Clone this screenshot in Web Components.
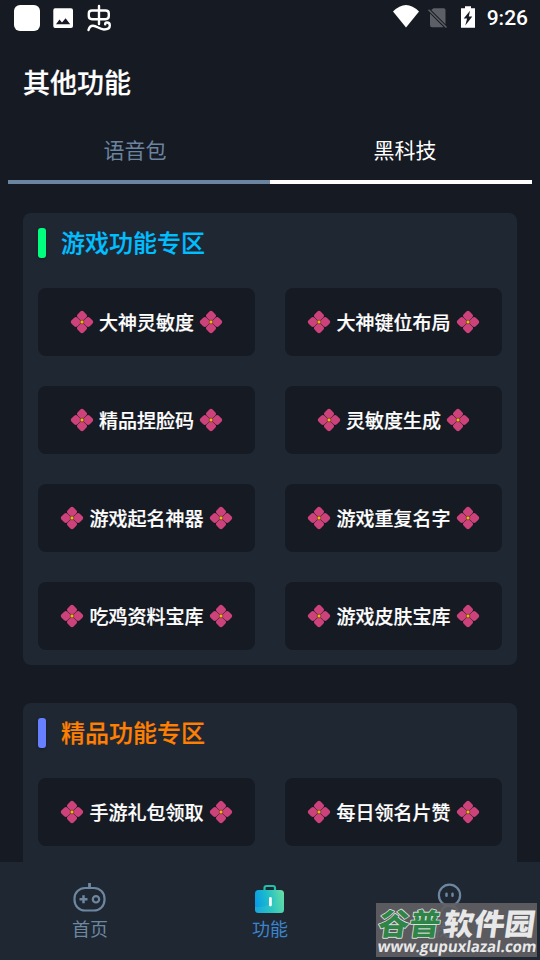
<!DOCTYPE html>
<html lang="zh-CN"><head><meta charset="utf-8"><title>其他功能</title>
<style>html,body{margin:0;height:100%;background:#161a23;overflow:hidden}</style></head>
<body><app-screen></app-screen>
<script>
const define=(name,html)=>{const t=document.createElement('template');t.innerHTML=html;
customElements.define(name,class extends HTMLElement{constructor(){super();this.attachShadow({mode:'open'}).append(t.content.cloneNode(true));}});};

define('flower-icon',`<style>:host{display:block;width:24px;height:24px}svg{display:block}</style>
<svg width="24" height="24" viewBox="-12 -12 24 24"><g fill="#cd427a" transform="rotate(45)">
<rect x=".2" y=".2" width="8.300" height="8.300" rx="2.300"/><rect x="-8.500" y=".2" width="8.300" height="8.300" rx="2.300"/><rect x=".2" y="-8.500" width="8.300" height="8.300" rx="2.300"/><rect x="-8.500" y="-8.500" width="8.300" height="8.300" rx="2.300"/></g>
<rect x="-1.700" y="-1.700" width="3.400" height="3.400" rx=".8" fill="#f5b60c" stroke="#5a3030" stroke-width=".6"/></svg>`);

define('feature-button',`<style>:host{display:flex;align-items:center;justify-content:center;gap:5px;height:68px;border-radius:8px;background:#161a23;color:#fff;font-size:19px;line-height:28px;font-weight:500;white-space:nowrap;-webkit-text-stroke:.2px}span{margin-top:-1px}</style><flower-icon></flower-icon><span><slot></slot></span><flower-icon></flower-icon>`);

define('feature-card',`<style>:host{display:block;background:#1f2733;border-radius:8px;padding:15px}
header{display:flex;align-items:center;gap:15px;height:30px;margin-bottom:30px;font-size:24px;line-height:30px;font-weight:500;color:var(--title);-webkit-text-stroke:.2px}
i{width:8px;height:30px;border-radius:3px;background:var(--bar);box-shadow:0 1px 3px #0005}b{font-weight:inherit;margin-top:-2px}
div{display:grid;grid-template-columns:1fr 1fr;gap:30px}</style>
<header><i></i><b><slot name="title"></slot></b></header><div><slot></slot></div>`);

define('status-bar',`<style>:host{display:flex;justify-content:space-between;height:36px;box-sizing:border-box;padding:0 12px 0 14px}
div{display:flex;align-items:center}svg{display:block}span{font:500 21px/38px Roboto,sans-serif;color:#fff}</style>
<div><svg width="100" height="36" fill="#fff"><rect y="5" width="26" height="26" rx="6"/>
<path fill-rule="evenodd" d="M41 8.200H57Q59 8.200 59 10.200V26Q59 28 57 28H41Q39.300 28 39.300 26V10.200Q39.300 8.200 41 8.200ZM42 24.300H56.200L51.600 18.200 48 22.600 45.500 19.600Z"/>
<g fill="none" stroke="#fff" stroke-width="2.400" stroke-linecap="round"><path d="M78 10.500H91.500Q94.800 10.500 94.800 13.500V16Q94.800 19.200 91.500 19.200H78Q74.800 19.200 74.800 16V13.500Q74.800 10.500 78 10.500M85 6V24"/><path d="M74.500 30Q75.500 25.700 79 25.700C83 25.700 85.500 29.500 90 29.500Q95.800 29.500 95.800 25.500Q95.800 22.500 93 22.500Q91 22.500 91.200 24.300"/></g></svg></div>
<div><svg width="94" height="36"><path fill="#fff" d="M0 11.500Q13-1.500 26 11.500L13 27.500Z"/>
<path fill="#5c5f66" d="M40.500 8.200H50.700Q52.500 8.200 52.500 10V24.200L38.200 10ZM37 13.500L50.700 27.200H39Q37 27.200 37 25Z"/><path d="M35.500 9.700L53.500 27.500" stroke="#5c5f66" stroke-width="1.500"/>
<path fill="#fff" fill-rule="evenodd" d="M72 6.200H78V8.200H82V27.700H68V8.200H72ZM77 10.700L70.700 18.400H74.100L72.300 25.400 79.300 16.600H75.800Z"/></svg><span>9:26</span></div>`);

define('tab-item',`<style>:host{display:block;flex:1;text-align:center;height:62px;line-height:54px;border-bottom:4px solid currentColor;box-sizing:border-box;color:#6b849f;font-size:21px}:host([active]){color:#fff}span{display:block;padding-right:8px}:host([active]) span{padding:0 0 0 8px}</style><span><slot></slot></span>`);

define('nav-item',`<style>:host{flex:1;display:flex;flex-direction:column;align-items:center;color:#6d87a1;font-size:18px;line-height:26px;padding-top:19px}:host([active]){color:#3c85cc}::slotted(svg){display:block;margin-bottom:2px;overflow:visible}</style><slot name="icon"></slot><span><slot></slot></span>`);

define('site-watermark',`<style>:host{display:block;width:161px;height:54px;background:rgba(96,97,100,.9)}svg{display:block;overflow:visible}text{stroke-linejoin:round;paint-order:stroke}</style>
<svg width="161" height="54"><g transform="translate(1 32) skewX(-8)" font-family="Noto Sans CJK SC,sans-serif" font-weight="900" font-size="30">
<text textLength="62" lengthAdjust="spacingAndGlyphs" fill="#2f8547" stroke="#e0e0e0" stroke-width="1.600">谷普</text><text x="65" textLength="92" lengthAdjust="spacingAndGlyphs" fill="#e8e8e8">软件园</text></g>
<g transform="translate(0 49) skewX(-8)"><text x="1" textLength="159" lengthAdjust="spacingAndGlyphs" fill="#e8e8e8" font-family="Open Sans,sans-serif" font-weight="700" font-size="15.500">www.gupuxlazal.com</text></g></svg>`);

define('app-screen',`<style>:host{display:flex;flex-direction:column;position:relative;width:540px;height:960px;overflow:hidden;background:#161a23;font-family:"Noto Sans CJK SC",sans-serif}
h1{margin:0;height:86px;box-sizing:border-box;padding:26px 23px 0;font-size:27px;line-height:40px;font-weight:500;color:#fff;-webkit-text-stroke:.2px}
.tabs{display:flex;padding:0 8px;height:62px}
main{flex:1;min-height:0;overflow:hidden;display:flex;flex-direction:column;gap:38px;padding:29px 23px 0}
feature-card{flex:none}feature-card:last-child{padding-bottom:30px}
nav{height:98px;display:flex;background:#1f2733}
site-watermark{position:absolute;right:3px;bottom:3px}</style>
<status-bar></status-bar><h1>其他功能</h1>
<div class="tabs"><tab-item>语音包</tab-item><tab-item active>黑科技</tab-item></div>
<main><feature-card style="--title:#00bfff;--bar:#00ff7f"><span slot="title">游戏功能专区</span>
<feature-button>大神灵敏度</feature-button><feature-button>大神键位布局</feature-button><feature-button>精品捏脸码</feature-button><feature-button>灵敏度生成</feature-button><feature-button>游戏起名神器</feature-button><feature-button>游戏重复名字</feature-button><feature-button>吃鸡资料宝库</feature-button><feature-button>游戏皮肤宝库</feature-button></feature-card>
<feature-card style="--title:#ff8000;--bar:#6680ff"><span slot="title">精品功能专区</span><feature-button>手游礼包领取</feature-button><feature-button>每日领名片赞</feature-button></feature-card></main>
<nav><nav-item><svg slot="icon" width="34" height="32" fill="none" stroke="#6d87a1" stroke-width="2.2"><rect x="1.500" y="7" width="30" height="22.500" rx="10.500"/><path d="M16.500 2V7" stroke-width="2.800"/><path d="M6.500 18.300H14.500M10.500 14.300V22.300" stroke-width="2.500"/><circle cx="23" cy="18.300" r="3.200"/></svg>首页</nav-item>
<nav-item active><svg slot="icon" width="34" height="32"><defs><linearGradient id="g" x1="0" y1=".6" x2="1" y2=".4"><stop stop-color="#079aea"/><stop offset=".5" stop-color="#1fbfc8"/><stop offset="1" stop-color="#65dca5"/></linearGradient></defs><path d="M11.500 10V7Q11.500 5 13.500 5H20Q22 5 22 7V10" fill="none" stroke="#23bfa8" stroke-width="2.200"/><rect x="2" y="9" width="29" height="23" rx="3.500" fill="url(#g)"/><path d="M2 26Q16 27 24 18Q28 14 31 14V28.500Q31 32 27.500 32H5.500Q2 32 2 28.500Z" fill="#50d8b0" opacity=".25"/><rect x="16" y="16" width="2.800" height="9.500" rx="1.400" fill="#fff"/></svg>功能</nav-item>
<nav-item><svg slot="icon" width="34" height="32" fill="none" stroke="#6d87a1" stroke-width="2.200"><circle cx="16.500" cy="14.300" r="10.600"/><path d="M13.500 12.800V14.800M19.500 12.800V14.800" stroke-width="2.500" stroke-linecap="round"/><path d="M8.500 31Q9 24.900 16.500 24.900T24.500 31"/></svg>我的</nav-item></nav><site-watermark></site-watermark>`);
</script></body></html>
